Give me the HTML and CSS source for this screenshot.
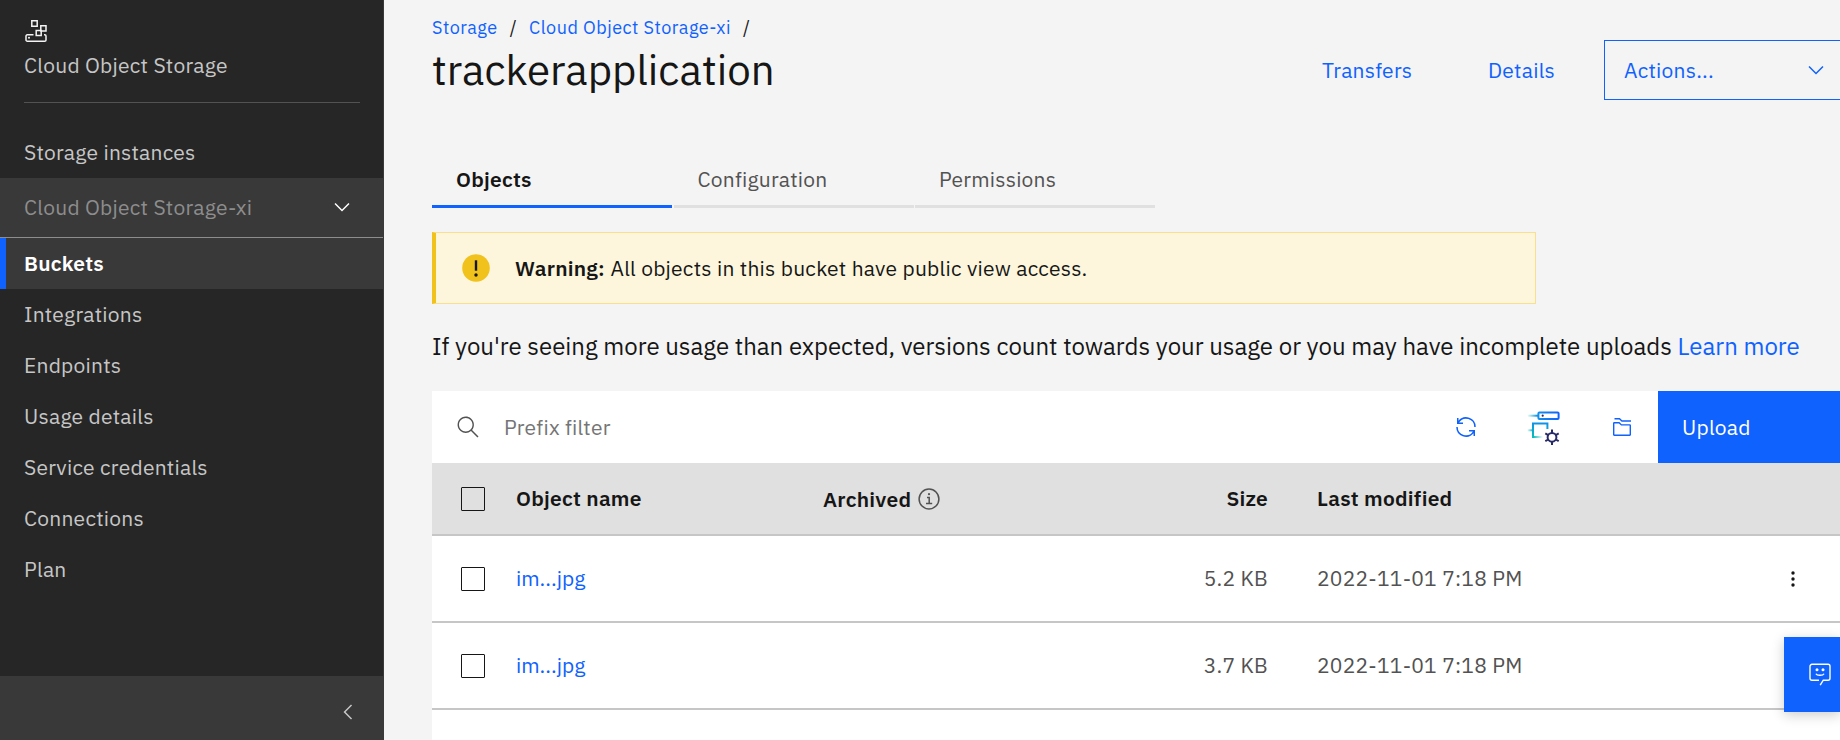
FILE: index.html
```
<!DOCTYPE html>
<html lang="en">
<head>
<meta charset="utf-8">
<title>Cloud Object Storage</title>
<link rel="stylesheet" href="styles.css">
</head>
<body>
<div class="app">
  <nav class="sidebar">
    <div class="brand">
      <svg class="brand-icon" width="24" height="24" viewBox="0 0 24 24" fill="none" stroke="#f4f4f4" stroke-width="1.5"><path d="M7.8 1.8h5.4v5.4H7.8zM16.8 6.8h5.2v5.2h-5.2zM12.2 11.6h5v5h-5zM9.5 15.8H3.3a1.3 1.3 0 0 0-1.3 1.3v3.8a1.3 1.3 0 0 0 1.3 1.3h17.4a1.3 1.3 0 0 0 1.3-1.3v-3.8a1.3 1.3 0 0 0-1.3-1.3h-.7"/><circle cx="5" cy="18.8" r="1" fill="#f4f4f4" stroke="none"/></svg>
      <span class="brand-name">Cloud Object Storage</span>
    </div>
    <a class="item">Storage instances</a>
    <div class="group">
      <span>Cloud Object Storage-xi</span>
      <svg width="24" height="24" viewBox="0 0 16 16" fill="#fff"><path d="M8 11L3 6l.7-.7L8 9.6l4.3-4.3.7.7z"/></svg>
    </div>
    <a class="item active">Buckets</a>
    <a class="item">Integrations</a>
    <a class="item">Endpoints</a>
    <a class="item">Usage details</a>
    <a class="item">Service credentials</a>
    <a class="item">Connections</a>
    <a class="item">Plan</a>
    <div class="collapse">
      <svg width="24" height="24" viewBox="0 0 16 16" fill="#c6c6c6"><path d="M5 8l5-5 .7.7L6.4 8l4.3 4.3-.7.7z"/></svg>
    </div>
  </nav>
  <main class="main">
    <header class="header">
      <div class="heading">
        <div class="breadcrumb"><a>Storage</a><i>/</i><a>Cloud Object Storage-xi</a><i>/</i></div>
        <h1 class="title">trackerapplication</h1>
      </div>
      <div class="actions">
        <a class="transfers">Transfers</a>
        <a class="details">Details</a>
        <div class="dropdown">
          <span>Actions...</span>
          <svg width="24" height="24" viewBox="0 0 16 16" fill="#0f62fe"><path d="M8 11L3 6l.7-.7L8 9.6l4.3-4.3.7.7z"/></svg>
        </div>
      </div>
    </header>
    <div class="tabs">
      <div class="tab selected">Objects</div>
      <div class="tab">Configuration</div>
      <div class="tab">Permissions</div>
    </div>
    <div class="warning">
      <svg width="28" height="28" viewBox="0 0 28 28"><circle cx="14" cy="14" r="13.8" fill="#f1c21b"/><path d="M12.8 6.3h2.4v10.4h-2.4z" fill="#161616"/><circle cx="14" cy="21" r="1.7" fill="#161616"/></svg>
      <b>Warning:</b><span>All objects in this bucket have public view access.</span>
    </div>
    <p class="note">If you're seeing more usage than expected, versions count towards your usage or you may have incomplete uploads <a>Learn more</a></p>
    <section class="table">
      <div class="toolbar">
        <svg class="search-icon" width="24" height="24" viewBox="0 0 16 16" fill="#525252"><path d="M15 14.3L10.7 10c1.9-2.3 1.6-5.8-.7-7.7S4.2.7 2.3 3 .7 8.8 3 10.7c2 1.7 5 1.7 7 0l4.3 4.3.7-.7zM2 6.5C2 4 4 2 6.5 2S11 4 11 6.5 9 11 6.5 11 2 9 2 6.5z"/></svg>
        <span class="placeholder">Prefix filter</span>
        <div class="tools">
          <span class="tool"><svg width="24" height="24" viewBox="0 0 32 32" fill="#0f62fe"><path d="M12 10H6.78A11 11 0 0 1 27 16h2A13 13 0 0 0 6 7.68V4H4v8h8zM20 22h5.22A11 11 0 0 1 5 16H3a13 13 0 0 0 23 8.32V28h2v-8h-8z"/></svg></span>
          <span class="tool">
            <svg width="36" height="36" viewBox="0 0 36 36" fill="none" stroke-width="2">
              <defs>
                <linearGradient id="top" gradientUnits="userSpaceOnUse" x1="1" y1="0" x2="34" y2="0"><stop offset="0" stop-color="#08bdba" stop-opacity="0"/><stop offset=".3" stop-color="#1192e8"/><stop offset="1" stop-color="#0f62fe"/></linearGradient>
                <linearGradient id="tick" gradientUnits="userSpaceOnUse" x1="1" y1="0" x2="7" y2="0"><stop offset="0" stop-color="#08bdba" stop-opacity="0"/><stop offset="1" stop-color="#08a8c8"/></linearGradient>
                <linearGradient id="box" gradientUnits="userSpaceOnUse" x1="0" y1="28" x2="0" y2="14"><stop offset="0" stop-color="#08bdba"/><stop offset="1" stop-color="#1192e8"/></linearGradient>
                <linearGradient id="foot" gradientUnits="userSpaceOnUse" x1="7" y1="0" x2="17" y2="0"><stop offset="0" stop-color="#08bdba"/><stop offset="1" stop-color="#08bdba" stop-opacity="0"/></linearGradient>
              </defs>
              <rect x="12.4" y="3.4" width="20.2" height="6.6" rx="1" stroke="url(#top)"/>
              <path d="M1.5 5.7h11v2h-11z" fill="url(#top)"/>
              <circle cx="16.7" cy="6.7" r="1.1" fill="#262a66"/>
              <path d="M7 29V14.6h14.4V20" stroke="url(#box)"/>
              <path d="M1.5 20.3h5.5v2h-5.5z" fill="url(#tick)"/>
              <path d="M6 27h11v2H6z" fill="url(#foot)"/>
              <g stroke="#262a66"><circle cx="26" cy="28.3" r="4.4"/><path d="M26 20.6v3.3M26 32.7V36M19.3 24.4l2.9 1.7M29.8 30.5l2.9 1.7M19.3 32.2l2.9-1.7M29.8 26.1l2.9-1.7"/></g>
            </svg>
          </span>
          <span class="tool"><svg width="24" height="24" viewBox="0 0 24 24" fill="none" stroke="#0f62fe" stroke-width="1.4"><path d="M3.7 8.3a.6.6 0 0 1 .6-.6h4.8l2.3 2.2h8.3a.6.6 0 0 1 .6.6v9.2a.6.6 0 0 1-.6.6H4.3a.6.6 0 0 1-.6-.6zM4.5 3.7h5l2.4 2.3H21"/></svg></span>
        </div>
        <button class="upload">Upload</button>
      </div>
      <div class="row head">
        <i class="check"></i><span>Object name</span>
        <span class="archived">Archived <svg width="24" height="24" viewBox="0 0 24 24" fill="none" stroke="#525252" stroke-width="1.5"><circle cx="12" cy="12" r="9.9"/><path d="M10 10.5h2.2v6M9 16.6h6.2"/><circle cx="12" cy="7.2" r="1.1" fill="#525252" stroke="none"/></svg></span>
        <span class="size">Size</span><span class="date">Last modified</span>
      </div>
      <div class="row">
        <i class="check"></i><a class="file">im...jpg</a><span></span><span class="size">5.2 KB</span><span class="date">2022-11-01 7:18 PM</span>
        <svg class="more" width="24" height="24" viewBox="0 0 24 24" fill="#161616"><circle cx="12" cy="6" r="1.7"/><circle cx="12" cy="12" r="1.7"/><circle cx="12" cy="18" r="1.7"/></svg>
      </div>
      <div class="row">
        <i class="check"></i><a class="file">im...jpg</a><span></span><span class="size">3.7 KB</span><span class="date">2022-11-01 7:18 PM</span>
      </div>
    </section>
  </main>
  <div class="chat">
    <svg width="24" height="24" viewBox="0 0 24 24" fill="none" stroke="#fff" stroke-width="1.4"><path d="M11 18.2H4a2 2 0 0 1-2-2V4.3a2 2 0 0 1 2-2h16a2 2 0 0 1 2 2v11.9a2 2 0 0 1-2 2h-4.7l-3.1 5M8 11.7c1 2.1 7 2.1 8 0"/><circle cx="9" cy="7.8" r="1.5" fill="#fff" stroke="none"/><circle cx="15" cy="7.8" r="1.5" fill="#fff" stroke="none"/></svg>
  </div>
</div>
</body>
</html>
```
FILE: styles.css
```
* { box-sizing: border-box; }
body {
  margin: 0;
  overflow: hidden;
  background: #f4f4f4;
  color: #161616;
  font: 400 21px/24px "IBM Plex Sans", Roboto, "Liberation Sans", sans-serif;
  letter-spacing: .24px;
  white-space: nowrap;
}
a { color: #0f62fe; text-decoration: none; }
svg { display: block; flex: none; }
.app { display: flex; width: 1840px; height: 740px; position: relative; overflow: hidden; }

.sidebar { display: flex; flex-direction: column; flex: none; width: 384px; background: #262626; border-right: 1px solid #393939; color: #c6c6c6; }
.brand { height: 84px; margin: 19px 24px 24px; width: 336px; border-bottom: 1px solid #525252; }
.brand-name { display: block; padding-top: 10px; }
.item { display: flex; align-items: center; height: 51px; padding: 0 0 1px 24px; color: #c6c6c6; }
.group { display: flex; align-items: center; justify-content: space-between; height: 60px; padding: 0 29px 1px 24px; background: #393939; border-bottom: 1px solid #8d8d8d; color: #8d8d8d; }
.active { background: #393939; border-left: 6px solid #0f62fe; padding-left: 18px; color: #fff; font-weight: 600; }
.collapse { margin-top: auto; height: 64px; padding: 24px 0 0 336px; background: #393939; }

.main { flex: none; width: 1456px; padding-left: 48px; }
.header { display: flex; height: 155px; }
.heading { width: 890px; padding-top: 16px; }
.breadcrumb { display: flex; font-size: 18px; line-height: 23px; letter-spacing: .48px; }
.breadcrumb i { font-style: normal; width: 31.5px; text-align: center; }
.title { margin: 6px 0 0; font-size: 42px; line-height: 49px; font-weight: 400; letter-spacing: 0; }
.actions { display: flex; align-items: center; height: 60px; margin-top: 40px; }
.transfers { width: 166px; }
.details { width: 116px; }
.dropdown { display: flex; align-items: center; justify-content: space-between; width: 236px; height: 60px; padding: 0 12px 0 19px; border: 1px solid #0f62fe; border-right: 0; color: #0f62fe; }

.tabs { display: flex; gap: 1.5px; height: 53px; }
.tab { width: 240px; padding: 12px 24px 0; border-bottom: 3px solid #e0e0e0; color: #525252; }
.selected { border-color: #0f62fe; color: #161616; font-weight: 600; }

.warning { display: flex; align-items: center; width: 1104px; height: 72px; margin-top: 24px; padding-left: 26px; background: #fdf6dd; border: 1px solid #f8e08e; border-left: 4px solid #f1c21b; }
.warning svg { margin-right: 25px; }
.warning b { width: 95.5px; font-weight: 600; }

.note { margin: 26px 0 29px; font-size: 24px; line-height: 32px; letter-spacing: 0; }

.table { height: 349px; background: #fff; }
.toolbar { display: flex; align-items: center; height: 72px; padding-left: 24px; }
.placeholder { margin-left: 24px; color: #757575; }
.tools { display: flex; gap: 6px; margin-left: auto; }
.tool { display: flex; align-items: center; justify-content: center; width: 72px; height: 72px; }
.upload { width: 182px; height: 72px; border: 0; padding: 0 24px; background: #0f62fe; color: #fff; font: inherit; letter-spacing: inherit; text-align: left; }
.row { display: grid; grid-template-columns: 55px 307px 321px 124px 513px 24px; align-items: center; height: 87px; padding: 0 0 1px 29px; border-bottom: 2px solid #c6c6c6; color: #525252; }
.head { height: 73px; background: #e0e0e0; color: #161616; font-weight: 600; }
.archived { display: flex; align-items: center; gap: 6px; padding-top: 2px; }
.check { width: 24px; height: 24px; margin-top: 2px; border: 1px solid #161616; border-radius: 1px; }
.more { margin-top: 2px; }
.size { text-align: right; }
.date { padding-left: 49px; }
.file { letter-spacing: 0; }

.chat { position: absolute; left: 1784px; top: 637px; width: 56px; height: 75px; padding: 25px 0 0 24px; background: #0f62fe; box-shadow: 0 3px 12px rgba(0, 0, 0, .2); }
```
